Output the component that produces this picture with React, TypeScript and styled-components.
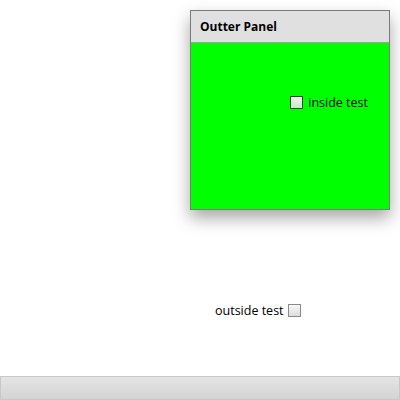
import React from "react";
import styled, { createGlobalStyle } from "styled-components";

const Global = createGlobalStyle`
  html, body { margin: 0; padding: 0; background: #fff; }
  body { font-family: "Open Sans", "Noto Sans", sans-serif; color: #000; }
`;

const Page = styled.div`
  width: 400px;
  height: 400px;
  display: flex;
  flex-direction: column;
  box-sizing: border-box;
`;

const Panel = styled.div`
  margin: 10px 0 0 190px;
  width: 200px;
  height: 200px;
  box-sizing: border-box;
  border: 1px solid #7a7a7a;
  display: flex;
  flex-direction: column;
  box-shadow: 0 8px 16px rgba(0, 0, 0, 0.35);
`;

const Header = styled.div`
  height: 32px;
  box-sizing: border-box;
  background: #e0e0e0;
  border-bottom: 1px solid #a0a0a0;
  display: flex;
  align-items: center;
  padding-left: 9px;
  font-weight: 700;
  font-size: 12px;
`;

const Body = styled.div`
  flex: 1;
  background: #00ff00;
  display: flex;
  justify-content: flex-end;
  align-items: flex-start;
  padding: 51px 21px 0 0;
`;

const Row = styled.label<{ $reverse?: boolean }>`
  display: flex;
  align-items: center;
  gap: ${(p) => (p.$reverse ? "4px" : "5px")};
  font-size: 12.5px;
  flex-direction: ${(p) => (p.$reverse ? "row-reverse" : "row")};
`;

const Box = styled.span<{ $dark?: boolean }>`
  width: 13px;
  height: 13px;
  box-sizing: border-box;
  border: 1px solid ${(p) => (p.$dark ? "#2a4a2a" : "#8a8a8a")};
  background: ${(p) =>
    p.$dark
      ? "linear-gradient(#f4f4f4, #c8e8c8)"
      : "linear-gradient(#f8f8f8, #dcdcdc)"};
`;

const Outside = styled.div`
  margin-top: 92px;
  padding-left: 215px;
  display: flex;
`;

const Spacer = styled.div`
  flex: 1;
`;

const Bar = styled.div`
  height: 24px;
  box-sizing: border-box;
  border: 1px solid #c8c8c8;
  background: linear-gradient(#e4e4e4, #d4d4d4);
`;

export default function App() {
  return (
    <Page>
      <Global />
      <Panel>
        <Header>Outter Panel</Header>
        <Body>
          <Row>
            <Box $dark />
            inside test
          </Row>
        </Body>
      </Panel>
      <Outside>
        <Row $reverse>
          <Box />
          outside test
        </Row>
      </Outside>
      <Spacer />
      <Bar />
    </Page>
  );
}
